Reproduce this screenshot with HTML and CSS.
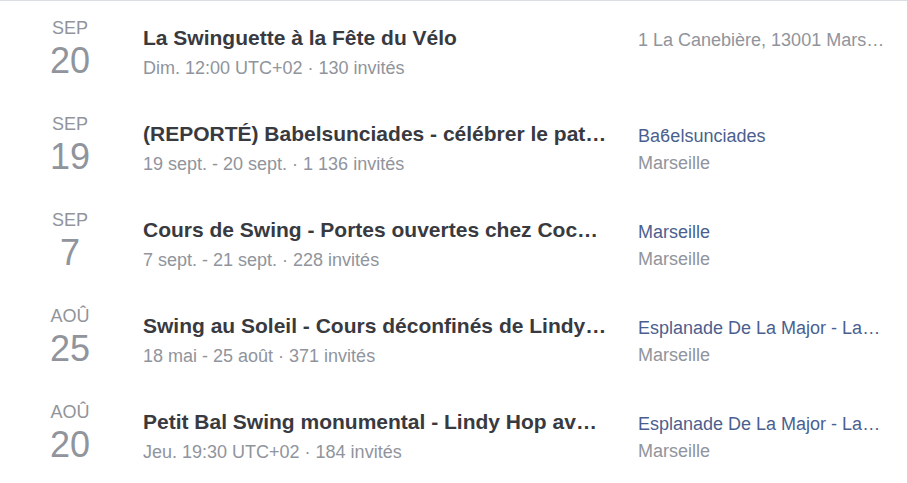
FILE: index.html
```html
<!DOCTYPE html>
<html lang="fr">
<head>
<meta charset="utf-8">
<title>Événements</title>
<link rel="stylesheet" href="styles.css">
</head>
<body>
<div class="events">
  <div class="event">
    <div class="date"><div class="month">SEP</div><div class="day">20</div></div>
    <div class="main">
      <div class="title">La Swinguette à la Fête du Vélo</div>
      <div class="meta">Dim. 12:00 UTC+02 · 130 invités</div>
    </div>
    <div class="place">
      <div class="line muted">1 La Canebière, 13001 Marseille</div>
    </div>
  </div>
  <div class="event">
    <div class="date"><div class="month">SEP</div><div class="day">19</div></div>
    <div class="main">
      <div class="title">(REPORTÉ) Babelsunciades - célébrer le patrimoine de Belsunce</div>
      <div class="meta">19 sept. - 20 sept. · 1 136 invités</div>
    </div>
    <div class="place">
      <div class="line link">Baϐelsunciades</div>
      <div class="line muted">Marseille</div>
    </div>
  </div>
  <div class="event">
    <div class="date"><div class="month">SEP</div><div class="day">7</div></div>
    <div class="main">
      <div class="title">Cours de Swing - Portes ouvertes chez Cocoon Swing</div>
      <div class="meta">7 sept. - 21 sept. · 228 invités</div>
    </div>
    <div class="place">
      <div class="line link">Marseille</div>
      <div class="line muted">Marseille</div>
    </div>
  </div>
  <div class="event">
    <div class="date"><div class="month">AOÛ</div><div class="day">25</div></div>
    <div class="main">
      <div class="title">Swing au Soleil - Cours déconfinés de Lindy Hop</div>
      <div class="meta">18 mai - 25 août · 371 invités</div>
    </div>
    <div class="place">
      <div class="line link">Esplanade De La Major - La Joliette</div>
      <div class="line muted">Marseille</div>
    </div>
  </div>
  <div class="event">
    <div class="date"><div class="month">AOÛ</div><div class="day">20</div></div>
    <div class="main">
      <div class="title">Petit Bal Swing monumental - Lindy Hop avec orchestre</div>
      <div class="meta">Jeu. 19:30 UTC+02 · 184 invités</div>
    </div>
    <div class="place">
      <div class="line link">Esplanade De La Major - La Joliette</div>
      <div class="line muted">Marseille</div>
    </div>
  </div>
</div>
</body>
</html>
```

FILE: styles.css
```css
html, body {
  margin: 0;
  padding: 0;
  background: #ffffff;
}
body {
  font-family: "Liberation Sans", Arial, sans-serif;
  color: #90949c;
}
.events {
  border-top: 1px solid #dadde1;
}
.event {
  display: flex;
  height: 96px;
  padding: 0 22px;
  box-sizing: border-box;
}
.date {
  width: 96px;
  flex: none;
  text-align: center;
  padding-top: 17px;
  color: #90949c;
}
.month {
  font-size: 18px;
  line-height: 20px;
}
.day {
  font-size: 36px;
  line-height: 36px;
  margin-top: 5px;
}
.main {
  flex: 1;
  min-width: 0;
  margin-left: 25px;
  padding-top: 25px;
}
.title {
  font-size: 21px;
  line-height: 24px;
  font-weight: bold;
  color: #383a3f;
  white-space: nowrap;
  overflow: hidden;
  text-overflow: ellipsis;
}
.meta {
  margin-top: 7px;
  font-size: 18px;
  line-height: 22px;
  color: #90949c;
  white-space: nowrap;
}
.place {
  width: 247px;
  flex: none;
  margin-left: 31px;
  padding-top: 26px;
}
.line {
  font-size: 18px;
  line-height: 27px;
  white-space: nowrap;
  overflow: hidden;
  text-overflow: ellipsis;
}
.link {
  color: #4b5f8f;
}
.muted {
  color: #90949c;
}
```
